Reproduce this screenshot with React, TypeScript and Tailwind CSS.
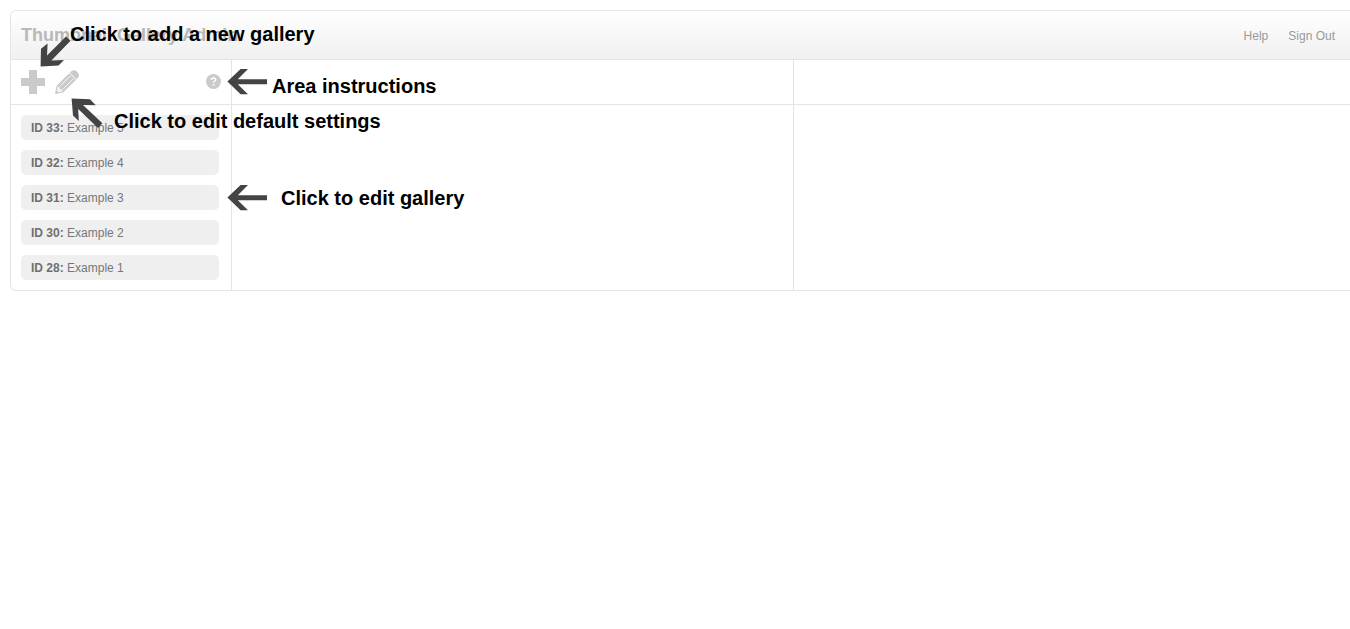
import React from "react";

const galleries = [
  { id: 33, name: "Example 5" },
  { id: 32, name: "Example 4" },
  { id: 31, name: "Example 3" },
  { id: 30, name: "Example 2" },
  { id: 28, name: "Example 1" },
];

function PlusIcon() {
  return (
    <svg width="24" height="24" viewBox="0 0 24 24" fill="#cacaca" aria-hidden="true">
      <path d="M8 0h8v8h8v8h-8v8H8v-8H0V8h8z" />
    </svg>
  );
}

function PencilIcon() {
  return (
    <svg width="24" height="24" viewBox="0 0 24 24" aria-hidden="true">
      <path
        d="M0 24 1.6 15.8 16 1.4Q18-.6 20.4.6 22.8 1.8 23.8 4.2 24.4 6.2 22.8 8L8.2 22.4Z"
        fill="#cacaca"
      />
      <path d="M14.2 2.6 21.4 9.8" stroke="#fff" strokeWidth="1" />
      <path d="M5 16.2 15.4 5.8M8 19.2 18.4 8.8" stroke="#fff" strokeWidth="0.9" />
      <path d="M2.6 16.4 4.6 17 5 19 7 19.4 7.6 21.4 3.4 22.2 1.8 20.6Z" fill="#f4f4f4" />
    </svg>
  );
}

function HelpIcon() {
  return (
    <svg width="16" height="16" viewBox="0 0 16 16" aria-hidden="true">
      <circle cx="8.5" cy="7.5" r="7.5" fill="#cacaca" />
      <path
        d="M6.3 6C6.3 4.6 7.2 4 8.5 4S10.7 4.6 10.7 5.7C10.7 7 8.6 7.1 8.6 8.8"
        fill="none"
        stroke="#fff"
        strokeWidth="1.5"
      />
      <path d="M7.8 10h1.6v1.6H7.8z" fill="#fff" />
    </svg>
  );
}

function ArrowLeft({ className }: { className: string }) {
  return (
    <svg className={className} width="40" height="26" viewBox="0 0 40 26" fill="#444" aria-hidden="true">
      <path d="M.4 12.6 13.6 0H21L10.8 10.2H40V15.2H10.8L21 25.2H13.6Z" />
    </svg>
  );
}

function ArrowDownLeft({ className }: { className: string }) {
  return (
    <svg className={className} width="32" height="32" viewBox="0 0 32 32" fill="#444" aria-hidden="true">
      <path d="M.6 30.4 1 12.8 7.6 7.4 7 19.6 26 .6 30.6 4.8 11.4 24.6 24 24 18.6 29.4Z" />
    </svg>
  );
}

function ArrowUpLeft({ className }: { className: string }) {
  return (
    <svg className={className} width="32" height="32" viewBox="0 0 32 32" fill="#444" aria-hidden="true">
      <path d="M.6.6 19 1.2 24.8 7.2 12 7 31.4 25.2 27 30 7.2 11 7.8 23 2 17.4Z" />
    </svg>
  );
}

const note = "absolute whitespace-nowrap text-[20px] leading-6 font-bold text-black";

export default function App() {
  return (
    <main className="relative overflow-hidden bg-white pt-[10px] pl-[10px] pb-4 font-['Liberation_Sans',Arial,sans-serif]">
      <div className="rounded-l-md border border-r-0 border-[#e4e4e4]">
        <header className="flex h-[49px] items-center justify-between rounded-tl-md border-b border-[#e4e4e4] bg-linear-to-b from-white to-[#f0f0f0] pr-[15px] pl-[10px]">
          <h1 className="text-[18px] leading-6 font-bold text-[#b8b8b8]">Thumbnail Gallery Admin</h1>
          <nav className="flex gap-5 pt-[2px] text-[12px] leading-4 text-[#999]">
            <a href="#help">Help</a>
            <a href="#sign-out">Sign Out</a>
          </nav>
        </header>

        <div className="grid grid-cols-[221px_562px_1fr]">
          <div className="flex h-[45px] items-center gap-[10px] border-r border-b border-[#e4e4e4] px-[10px]">
            <button type="button" aria-label="Add a new gallery">
              <PlusIcon />
            </button>
            <button type="button" aria-label="Edit default settings">
              <PencilIcon />
            </button>
            <button type="button" aria-label="Area instructions" className="ml-auto">
              <HelpIcon />
            </button>
          </div>
          <div className="border-r border-b border-[#e4e4e4]" />
          <div className="border-b border-[#e4e4e4]" />

          <ul className="flex flex-col gap-[10px] border-r border-[#e4e4e4] py-[10px] pr-3 pl-[10px]">
            {galleries.map((g) => (
              <li key={g.id}>
                <button
                  type="button"
                  className="block h-[25px] w-full rounded-[5px] bg-[#efefef] px-[10px] pt-px text-left text-[12px] leading-6 text-[#777]"
                >
                  <b className="text-[#707070]">ID {g.id}:</b> {g.name}
                </button>
              </li>
            ))}
          </ul>
          <div className="border-r border-[#e4e4e4]" />
          <div />
        </div>
      </div>

      <ArrowDownLeft className="absolute top-[36px] left-[40px]" />
      <p className={`${note} top-[22px] left-[70px]`}>Click to add a new gallery</p>
      <ArrowUpLeft className="absolute top-[98px] left-[71px]" />
      <p className={`${note} top-[109px] left-[114px]`}>Click to edit default settings</p>
      <ArrowLeft className="absolute top-[69px] left-[227px]" />
      <p className={`${note} top-[74px] left-[272px]`}>Area instructions</p>
      <ArrowLeft className="absolute top-[185px] left-[227px]" />
      <p className={`${note} top-[186px] left-[281px]`}>Click to edit gallery</p>
    </main>
  );
}
